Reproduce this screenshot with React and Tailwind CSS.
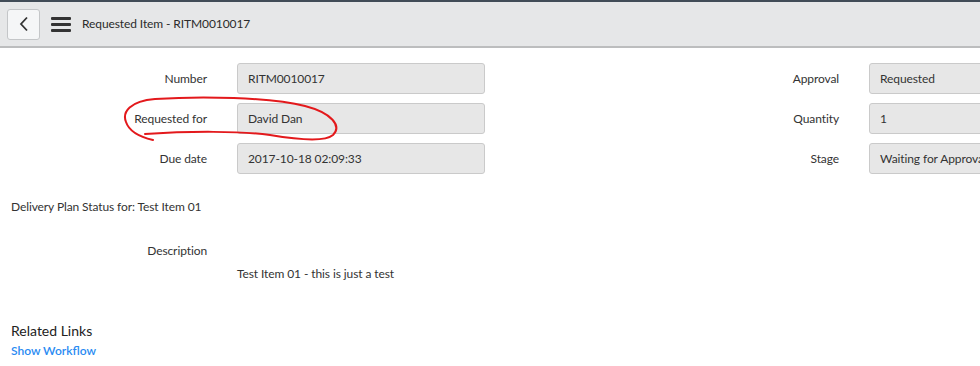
import React from "react";

const font = { fontFamily: "Lato, 'Liberation Sans', sans-serif" };

function Field({ label, value }) {
    return (
        <div className="flex items-center h-[31px]">
            <div className="w-[207px] text-right text-[12px] tracking-[-0.1px] text-[#333]">{label}</div>
            <div className="ml-[30px] w-[248px] h-[31px] flex items-center px-[10px] bg-[#e7e7e7] border border-[#cacaca] rounded-[3px] text-[12px] tracking-[-0.1px] text-[#333] whitespace-nowrap overflow-hidden">
                {value}
            </div>
        </div>
    );
}

function Header() {
    return (
        <div className="border-t-2 border-[#414c57]">
            <div className="h-[46px] bg-[#e6e7e8] border-b-2 border-[#bcbdbe] flex items-center">
                <button className="ml-[7px] w-[33px] h-[31px] bg-[#f5f6f7] border border-[#c4c6c8] rounded-[3px] flex items-center justify-center">
                    <svg width="10" height="16" viewBox="0 0 10 16" fill="none">
                        <path d="M8 1.5 L2 8 L8 14.5" stroke="#333" strokeWidth="1.8" />
                    </svg>
                </button>
                <div className="ml-[11px] w-[20px] flex flex-col gap-[3px]">
                    <div className="h-[3px] bg-[#333] rounded-[1px]" />
                    <div className="h-[3px] bg-[#333] rounded-[1px]" />
                    <div className="h-[3px] bg-[#333] rounded-[1px]" />
                </div>
                <div className="ml-[11px] text-[12px] tracking-[-0.1px] text-[#2b2b2b]">Requested Item - RITM0010017</div>
            </div>
        </div>
    );
}

export default function App() {
    return (
        <div className="w-[980px] h-[366px] overflow-hidden bg-white relative" style={font}>
            <Header />
            <div className="flex pt-[15px]">
                <div className="flex flex-col gap-[9px] shrink-0">
                    <Field label="Number" value="RITM0010017" />
                    <Field label="Requested for" value="David Dan" />
                    <Field label="Due date" value="2017-10-18 02:09:33" />
                </div>
                <div className="ml-[147px] flex flex-col gap-[9px] shrink-0">
                    <Field label="Approval" value="Requested" />
                    <Field label="Quantity" value="1" />
                    <Field label="Stage" value="Waiting for Approval" />
                </div>
            </div>
            <div className="mt-[24px] pl-[11px] text-[12px] tracking-[-0.1px] text-[#333]">Delivery Plan Status for: Test Item 01</div>
            <div className="mt-[26px] w-[207px] text-right text-[12px] tracking-[-0.1px] text-[#333]">Description</div>
            <div className="mt-[5px] pl-[237px] text-[12px] tracking-[-0.1px] text-[#333]">Test Item 01 - this is just a test</div>
            <div className="mt-[38px] pl-[11px] text-[14px] leading-[20px] text-[#222]">Related Links</div>
            <div className="pl-[11px] text-[12px] leading-[20px] font-semibold text-[#2a8bf2]">Show Workflow</div>
            <svg className="absolute left-0 top-0 pointer-events-none" width="980" height="366" viewBox="0 0 980 366">
                <path
                    d="M145,134 C190,131 240,131 270,135 C300,140 325,142 333,135 C342,126 332,113 305,106 C270,97 200,96 155,99 C130,101 122,112 126,122 C129,131 140,137 153,140"
                    fill="none"
                    stroke="#e3191c"
                    strokeWidth="2"
                    strokeLinecap="round"
                />
            </svg>
        </div>
    );
}
